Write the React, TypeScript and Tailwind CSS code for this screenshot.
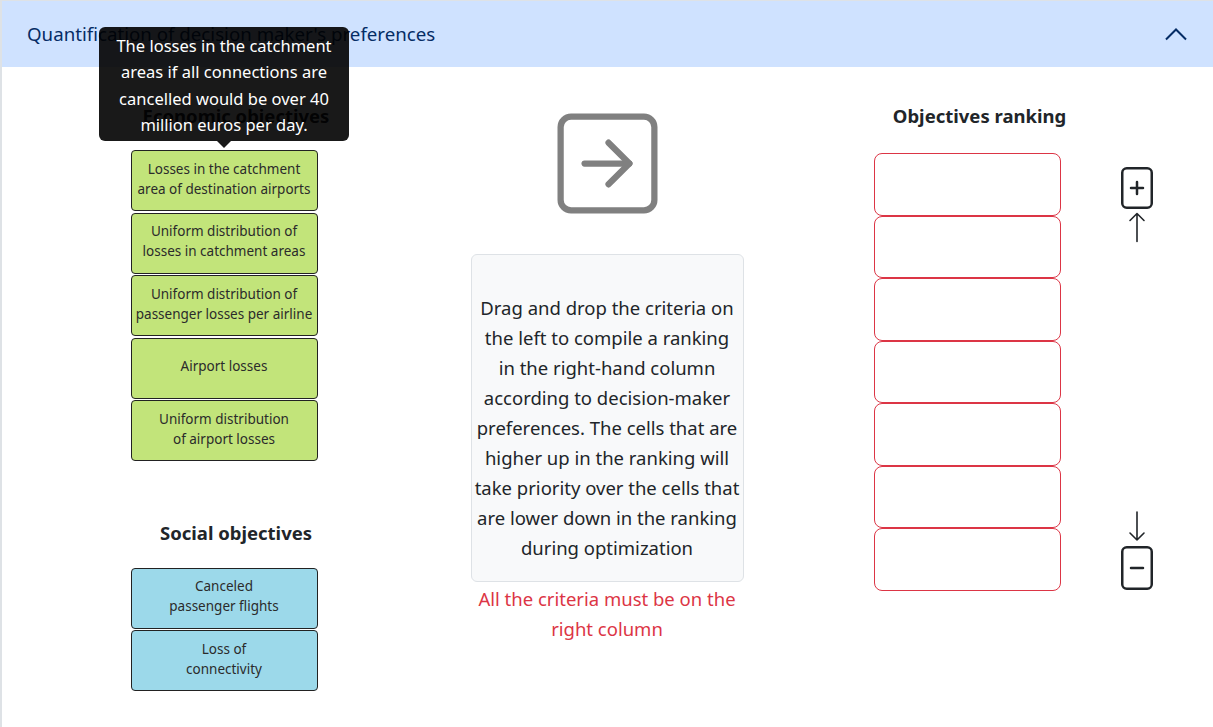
import React from 'react';

const economic = [
  ['Losses in the catchment', 'area of destination airports'],
  ['Uniform distribution of', 'losses in catchment areas'],
  ['Uniform distribution of', 'passenger losses per airline'],
  ['Airport losses'],
  ['Uniform distribution', 'of airport losses'],
];

const social = [
  ['Canceled', 'passenger flights'],
  ['Loss of', 'connectivity'],
];

const helpLines = [
  'Drag and drop the criteria on',
  'the left to compile a ranking',
  'in the right-hand column',
  'according to decision-maker',
  'preferences. The cells that are',
  'higher up in the ranking will',
  'take priority over the cells that',
  'are lower down in the ranking',
  'during optimization',
];

const Criterion: React.FC<{ lines: string[]; color: string }> = ({ lines, color }) => (
  <div
    className={`w-[187px] h-[61px] pb-[4px] flex flex-col items-center justify-center border border-[#222] rounded-[4px] text-[13.5px] leading-[20px] text-[#2b2b2b] text-center ${color}`}
  >
    {lines.map((l) => (
      <span key={l} className="whitespace-nowrap">{l}</span>
    ))}
  </div>
);

export default function App() {
  return (
    <div className="min-h-[727px] bg-white border-l-2 border-t border-[#dee2e6] text-[#212529]" style={{ fontFamily: '"Noto Sans", "Open Sans", sans-serif' }}>
      {/* accordion header */}
      <div className="h-[66px] bg-[#cfe2ff] flex items-center justify-between pl-[25px] pr-[26px]">
        <span className="text-[18.7px] text-[#052c65]">Quantification of decision maker's preferences</span>
        <svg width="22" height="14" viewBox="0 0 22 14" fill="none" stroke="#052c65" strokeWidth="2">
          <polyline points="1,12.5 11,2.5 21,12.5" />
        </svg>
      </div>

      <div className="relative flex">
        {/* left column */}
        <div className="w-[444px] flex flex-col items-center pt-[35px]">
          <h3 className="pl-[24px] text-[18.5px] leading-[27px] font-bold mb-[21px]">Economic objectives</h3>
          <div className="flex flex-col gap-[1.5px]">
            {economic.map((c, i) => (
              <Criterion key={i} lines={c} color="bg-[#c2e47a]" />
            ))}
          </div>
          <h3 className="pl-[24px] text-[18.5px] leading-[27px] font-bold mt-[58px] mb-[21.5px]">Social objectives</h3>
          <div className="flex flex-col gap-[1.5px]">
            {social.map((c, i) => (
              <Criterion key={i} lines={c} color="bg-[#9cd9ea]" />
            ))}
          </div>
        </div>

        {/* middle column */}
        <div className="w-[322px] flex flex-col items-center pt-[33.5px]">
          <svg width="125" height="125" viewBox="0 0 24 24" fill="none" stroke="#808080" strokeWidth="1.2" strokeLinecap="round" strokeLinejoin="round">
            <rect x="3" y="3" width="18" height="18" rx="2" />
            <path d="M7.6 12h8.6" />
            <path d="m12.2 8 4 4-4 4" />
          </svg>
          <div className="mt-[28.5px] w-[273px] h-[328px] bg-[#f8f9fa] border border-[#dee2e6] rounded-[6px] pt-[38px] text-center text-[18.5px] leading-[30px]">
            {helpLines.map((l) => (
              <div key={l} className="whitespace-nowrap">{l}</div>
            ))}
          </div>
          <p className="mt-[2px] text-center text-[18.5px] leading-[30px] text-[#dc3545]">
            All the criteria must be on the
            <br />
            right column
          </p>
        </div>

        {/* right column */}
        <div className="flex pt-[35px]">
          <div className="ml-[106px] w-[187px] flex flex-col items-center">
            <h3 className="pl-[24px] whitespace-nowrap text-[18.5px] leading-[27px] font-bold mb-[24px]">Objectives ranking</h3>
            <div className="flex flex-col">
              {Array.from({ length: 7 }).map((_, i) => (
                <div key={i} className="w-[187px] h-[62.5px] border border-[#dc3545] rounded-[8px]" />
              ))}
            </div>
          </div>
          <div className="ml-[56px] mt-[65px] flex flex-col justify-between h-[423px]">
            <svg width="40" height="76" viewBox="0 0 40 76" fill="none" stroke="#212529" strokeLinecap="round" strokeLinejoin="round">
              <rect x="5.25" y="1.25" width="29.5" height="39.5" rx="4.5" strokeWidth="2.5" />
              <path d="M14 21h12M20 15v12" strokeWidth="2.5" />
              <path d="M20 46.5v28M13 53.5l7-7 7 7" strokeWidth="1.6" />
            </svg>
            <svg width="40" height="79" viewBox="0 0 40 79" fill="none" stroke="#212529" strokeLinecap="round" strokeLinejoin="round">
              <path d="M20 1v28M13 22l7 7 7-7" strokeWidth="1.6" />
              <rect x="5.25" y="36.25" width="29.5" height="41.5" rx="4.5" strokeWidth="2.5" />
              <path d="M14 57h12" strokeWidth="2.5" />
            </svg>
          </div>
        </div>

        {/* tooltip */}
        <div className="absolute left-[97px] top-[-40px] w-[250px] flex flex-col items-center">
          <div className="w-full bg-black/90 rounded-[6px] pt-[5.5px] pb-[2.5px] text-white text-center text-[16.5px] leading-[26.5px]">
            The losses in the catchment
            <br />
            areas if all connections are
            <br />
            cancelled would be over 40
            <br />
            million euros per day.
          </div>
          <div className="w-0 h-0 border-l-[7px] border-r-[7px] border-t-[7px] border-l-transparent border-r-transparent border-t-black/90" />
        </div>
      </div>
    </div>
  );
}
